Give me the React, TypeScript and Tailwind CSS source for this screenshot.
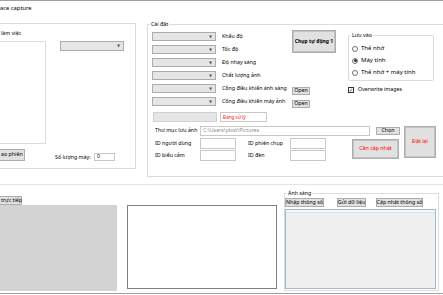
import React from 'react';

type BoxProps = { className?: string; children?: React.ReactNode };

function Group({ label, className = '', children }: BoxProps & { label?: string }) {
  return (
    <div className={`relative border-[#dcdcdc] ${className}`}>
      {label && (
        <span className="absolute -top-[4px] left-[2px] bg-white px-[1px] leading-[7px]">{label}</span>
      )}
      {children}
    </div>
  );
}

function Combo({ className = '' }: BoxProps) {
  return (
    <div
      className={`flex h-[9px] w-[64px] items-center justify-end border border-[#acacac] bg-[#e5e5e5] pr-[3px] ${className}`}
    >
      <span className="text-[4px] leading-none text-[#606060]">▼</span>
    </div>
  );
}

function Btn({ className = '', children }: BoxProps) {
  return (
    <div
      className={`flex items-center justify-center whitespace-nowrap border border-[#adadad] bg-[#e1e1e1] leading-none ${className}`}
    >
      {children}
    </div>
  );
}

function TextBox({ className = '', children }: BoxProps) {
  return (
    <div className={`flex items-center border border-[#c8c8c8] bg-white pl-[2px] leading-none ${className}`}>
      {children}
    </div>
  );
}

function Radio({ checked, label }: { checked?: boolean; label: string }) {
  return (
    <div className="flex h-[9px] items-center">
      <span className="flex h-[6px] w-[6px] items-center justify-center rounded-full border border-[#707070] bg-white">
        {checked && <span className="h-[3px] w-[3px] rounded-full bg-[#333]" />}
      </span>
      <span className="ml-[3px] text-[6px]">{label}</span>
    </div>
  );
}

const settings = ['Khẩu độ', 'Tốc độ', 'Độ nhạy sáng', 'Chất lượng ảnh', 'Cổng điều khiển ánh sáng', 'Cổng điều khiển máy ảnh'];

export default function App() {
  return (
    <div className="flex h-[295px] w-[443px] flex-col overflow-hidden border-t border-[#a0a0a0] bg-white font-['Noto_Sans','DejaVu_Sans',sans-serif] text-[5.3px] text-black">
      <div className="h-[21px] pt-[4px] text-[5.8px] leading-[7px]">ace capture</div>

      <div className="flex h-[155px] items-start">
        {/* session group, clipped by the window edge */}
        <Group className="mt-[1px] flex h-[146px] w-[136px] flex-col border-y border-r">
          <div className="ml-[1px] mt-[6px] h-[7px] leading-[7px]">làm việc</div>
          <div className="mt-[4px] flex items-start">
            <div className="h-[103px] w-[46px] border-y border-r border-[#dcdcdc] bg-white" />
            <Combo className="ml-[14px] h-[10px]" />
          </div>
          <div className="mt-[5px] flex items-end">
            <Btn className="h-[12px] w-[25px] justify-start border-l-0 pl-[1px]">ao phiên</Btn>
            <span className="ml-[30px] w-[39px] whitespace-nowrap leading-[8px]">Số lượng máy:</span>
            <TextBox className="h-[8px] w-[21px]">0</TextBox>
          </div>
        </Group>

        <Group label="Cài đặt" className="-mr-[10px] ml-[11px] mt-[2px] flex h-[153px] flex-1 flex-col border-y border-l">
          <div className="flex items-start">
            <div className="flex flex-col gap-[4px] pl-[4px] pt-[7px]">
              {settings.map((s) => (
                <div key={s} className="flex h-[9px] items-center">
                  <Combo />
                  <span className="ml-[6px] w-[70px] whitespace-nowrap">{s}</span>
                </div>
              ))}
            </div>
            <div className="flex w-[44px] flex-col pt-[5px]">
              <Btn className="h-[23px] w-[44px] border-[#8f8f8f] bg-[#dcdcdc] text-[5px] font-bold shadow-[inset_0_0_0_1px_#c4c4c4]">
                Chụp tự động 1
              </Btn>
              <Btn className="mt-[34px] h-[8px] w-[18px]">Open</Btn>
              <Btn className="mt-[5px] h-[8px] w-[18px]">Open</Btn>
            </div>
            <div className="ml-[12px] flex w-[86px] flex-col pt-[10px]">
              <Group label="Lưu vào" className="flex h-[46px] flex-col gap-[3px] rounded-[2px] border pl-[3px] pt-[8px]">
                <Radio label="Thẻ nhớ" />
                <Radio checked label="Máy tính" />
                <Radio label="Thẻ nhớ + máy tính" />
              </Group>
              <div className="mt-[5px] flex h-[8px] items-center">
                <span className="flex h-[6px] w-[6px] items-center justify-center border border-[#333] bg-white text-[5px] leading-none">
                  ✓
                </span>
                <span className="ml-[4px]">Overwrite images</span>
              </div>
            </div>
          </div>

          <div className="mt-[4px] flex pl-[5px]">
            <div className="h-[10px] w-[64px] border border-[#d0d0d0] bg-[#e6e6e6]" />
            <TextBox className="ml-[3px] h-[10px] w-[47px] text-[4.5px] text-[#ff0000]">Đang xử lý</TextBox>
          </div>

          <div className="mt-[4px] flex items-start pl-[4px]">
            <div className="flex w-[248px] flex-col">
              <div className="flex h-[10px] items-center">
                <span className="w-[48px] whitespace-nowrap pl-[3px]">Thư mục lưu ảnh</span>
                <TextBox className="h-[10px] w-[170px] text-[#8a8a8a]">C:\Users\ykist\Pictures</TextBox>
                <Btn className="ml-[6px] h-[8px] w-[24px]">Chọn</Btn>
              </div>
              <div className="mt-[2px] flex items-start">
                <div className="grid grid-cols-[48px_36px_54px_36px] items-center gap-y-[1px]">
                  <span className="pl-[3px]">ID người dùng</span>
                  <TextBox className="h-[11px]" />
                  <span className="pl-[12px]">ID phiên chụp</span>
                  <TextBox className="h-[11px]" />
                  <span className="pl-[3px]">ID biểu cảm</span>
                  <TextBox className="h-[11px]" />
                  <span className="pl-[12px]">ID đèn</span>
                  <TextBox className="h-[11px]" />
                </div>
                <Btn className="ml-[26px] mt-[1px] h-[20px] w-[47px] border-[#8f8f8f] text-[#ff0000] shadow-[inset_0_0_0_1px_#c4c4c4]">
                  Cần cập nhật
                </Btn>
              </div>
            </div>
            <Btn className="ml-[4px] h-[32px] w-[32px] border-[#8f8f8f] text-[#ff0000] shadow-[inset_0_0_0_1px_#c4c4c4]">
              Đặt lại
            </Btn>
          </div>
        </Group>
      </div>

      <div className="mt-[7px] border-t border-[#dfe5ea]" />

      <div className="flex flex-1 items-start">
        <div className="flex w-[117px] flex-col pt-[11px]">
          <Btn className="h-[9px] w-[22px] justify-start border-l-0 pl-[1px]">trực tiếp</Btn>
          <div className="h-[86px] bg-[#d3d3d3]" />
        </div>
        <div className="ml-[10px] mt-[20px] h-[84px] w-[150px] border border-[#808080] bg-white" />
        <Group label="Ánh sáng" className="ml-[7px] mt-[8px] flex h-[98px] w-[155px] flex-col border pt-[4px]">
          <div className="flex">
            <Btn className="h-[9px] w-[39px]">Nhập thông số</Btn>
            <Btn className="ml-[13px] h-[9px] w-[29px]">Gửi dữ liệu</Btn>
            <Btn className="ml-[10px] h-[9px] w-[47px]">Cập nhật thông số</Btn>
          </div>
          <div className="mt-[2px] h-[80px] w-[151px] border border-[#a3b6ca] bg-[#f0f0f0]">
            <div className="h-[3px] border-b border-[#dde3ea] bg-[#f7f7f7]" />
          </div>
        </Group>
      </div>

      <div className="h-px bg-[#a0a0a0]" />
      <div className="h-px" />
    </div>
  );
}
